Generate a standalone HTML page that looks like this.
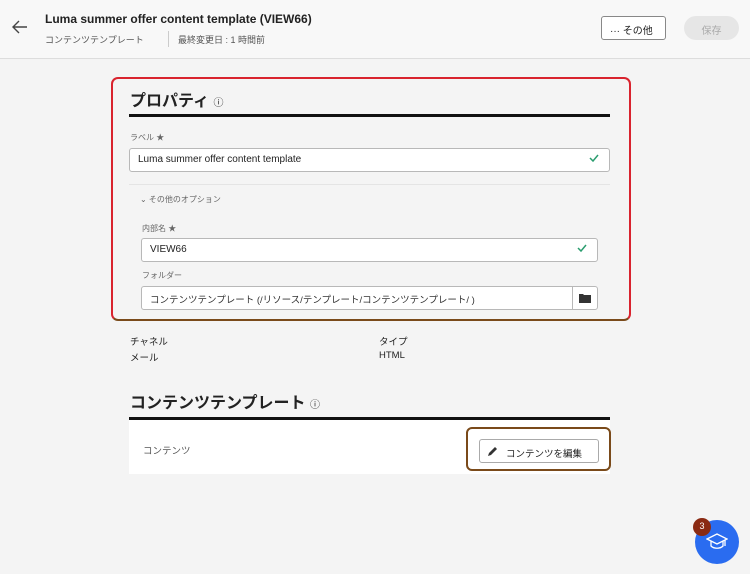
<!DOCTYPE html>
<html><head><meta charset="utf-8"><style>
*{box-sizing:border-box;margin:0;padding:0}
body{width:750px;height:574px;background:#f4f4f4;font-family:"Liberation Sans","Noto Sans CJK JP",sans-serif;color:#222;position:relative;overflow:hidden}
.hdr{position:absolute;left:0;top:0;width:750px;height:59px;background:#f8f8f8;border-bottom:1px solid #ddd}
.a{position:absolute}
.inp{position:absolute;background:#fff;border:1px solid #b8b8b8;border-radius:3px;height:24px;font-size:10px;padding:5px 8px;color:#222}
.chk{position:absolute;right:10px;top:4px}
.lbl{position:absolute;font-size:8px;color:#666}
</style></head><body>
<div class="hdr">
 <svg class="a" style="left:12px;top:20px" width="16" height="14" viewBox="0 0 16 14"><path d="M15 7H2M7 1L1 7l6 6" fill="none" stroke="#444" stroke-width="1.4"/></svg>
 <div class="a" style="left:45px;top:12px;font-size:12px;font-weight:bold">Luma summer offer content template (VIEW66)</div>
 <div class="a" style="left:45px;top:33px;font-size:9px;color:#555">コンテンツテンプレート</div>
 <div class="a" style="left:168px;top:31px;width:1px;height:16px;background:#ccc"></div>
 <div class="a" style="left:178px;top:33px;font-size:9px;color:#555">最終変更日 : 1 時間前</div>
 <div class="a" style="left:601px;top:16px;width:65px;height:24px;border:1px solid #888;border-radius:3px;background:#fff;font-size:10px;padding:5px 0 0 8px">··· その他</div>
 <div class="a" style="left:684px;top:16px;width:55px;height:24px;border-radius:12px;background:#e6e6e6;color:#aaa;font-size:10px;text-align:center;padding-top:6px">保存</div>
</div>
<div class="a" style="left:111px;top:77px;width:520px;height:244px;border:2px solid #d9232e;border-bottom-color:#7a4a1a;border-radius:7px"></div>
<div class="a" style="left:130px;top:87px;font-size:16px;font-weight:bold">プロパティ <span style="font-size:10px;font-weight:normal">ⓘ</span></div>
<div class="a" style="left:129px;top:114px;width:481px;height:3px;background:#111"></div>
<div class="lbl" style="left:130px;top:132px">ラベル ★</div>
<div class="inp" style="left:129px;top:148px;width:481px">Luma summer offer content template<svg class="chk" width="10" height="10" viewBox="0 0 10 10"><path d="M1 5l3 3 5-6" fill="none" stroke="#2a9d6f" stroke-width="1.5"/></svg></div>
<div class="a" style="left:129px;top:184px;width:481px;height:1px;background:#e4e4e4"></div>
<div class="lbl" style="left:140px;top:194px">⌄ その他のオプション</div>
<div class="lbl" style="left:142px;top:223px">内部名 ★</div>
<div class="inp" style="left:141px;top:238px;width:457px">VIEW66<svg class="chk" width="10" height="10" viewBox="0 0 10 10"><path d="M1 5l3 3 5-6" fill="none" stroke="#2a9d6f" stroke-width="1.5"/></svg></div>
<div class="lbl" style="left:142px;top:270px">フォルダー</div>
<div class="inp" style="left:141px;top:286px;width:457px;color:#333;font-size:9.5px">コンテンツテンプレート (/リソース/テンプレート/コンテンツテンプレート/ )<span style="position:absolute;right:0;top:0;width:25px;height:22px;border-left:1px solid #b8b8b8"><svg style="position:absolute;left:6px;top:6px" width="12" height="10" viewBox="0 0 12 10"><path d="M0 1h4l1 1h7v8H0z" fill="#333"/></svg></span></div>
<div class="a" style="left:130px;top:334px;font-size:9.5px">チャネル</div>
<div class="a" style="left:130px;top:350px;font-size:9.5px">メール</div>
<div class="a" style="left:379px;top:334px;font-size:9.5px">タイプ</div>
<div class="a" style="left:379px;top:350px;font-size:9.5px">HTML</div>
<div class="a" style="left:130px;top:389px;font-size:16px;font-weight:bold">コンテンツテンプレート <span style="font-size:10px;font-weight:normal">ⓘ</span></div>
<div class="a" style="left:129px;top:417px;width:481px;height:3px;background:#111"></div>
<div class="a" style="left:129px;top:420px;width:481px;height:54px;background:#fff"></div>
<div class="a" style="left:143px;top:443px;font-size:9.5px;color:#555">コンテンツ</div>
<div class="a" style="left:466px;top:427px;width:145px;height:44px;border:2px solid #7a4a1a;border-radius:6px"></div>
<div class="a" style="left:479px;top:439px;width:120px;height:24px;border:1px solid #aaa;border-radius:3px;background:#fff;font-size:9.5px;padding:6px 0 0 26px">コンテンツを編集<svg style="position:absolute;left:7px;top:6px" width="11" height="11" viewBox="0 0 11 11"><path d="M1 10l1-3 6-6 2 2-6 6z" fill="#333"/></svg></div>
<div class="a" style="left:695px;top:520px;width:44px;height:44px;border-radius:50%;background:#2a6cf0"><svg style="position:absolute;left:11px;top:12px" width="22" height="20" viewBox="0 0 22 20"><path d="M1 7l10-5 10 5-10 5zM5 9v5c3 3 9 3 12 0V9M19 8v6" fill="none" stroke="#fff" stroke-width="1.3"/></svg></div>
<div class="a" style="left:693px;top:518px;width:18px;height:18px;border-radius:50%;background:#8a2a12;color:#fff;font-size:9px;text-align:center;padding-top:3px">3</div>
</body></html>
